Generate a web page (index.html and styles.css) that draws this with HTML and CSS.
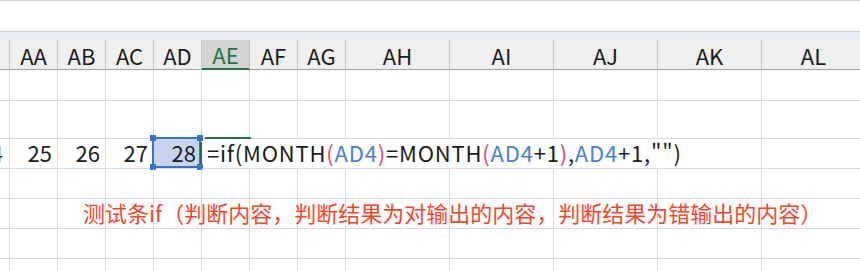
FILE: index.html
```html
<!DOCTYPE html>
<html lang="zh-CN">
<head>
    <meta charset="UTF-8">
    <title>Sheet</title>
    <link rel="stylesheet" href="styles.css">
</head>
<body>
    <div class="sheet">
        <div class="formula-bar"></div>
        <div class="band"></div>
        <div class="grid">
            <div class="head"></div>
            <div class="head">AA</div><div class="head">AB</div><div class="head">AC</div><div class="head">AD</div>
            <div class="head head-active">AE</div><div class="head">AF</div><div class="head">AG</div>
            <div class="head">AH</div><div class="head">AI</div><div class="head">AJ</div><div class="head">AK</div><div class="head">AL</div>

            <div class="cell"></div><div class="cell"></div><div class="cell"></div><div class="cell"></div><div class="cell"></div><div class="cell"></div><div class="cell"></div><div class="cell"></div><div class="cell"></div><div class="cell"></div><div class="cell"></div><div class="cell"></div><div class="cell"></div>

            <div class="cell"></div><div class="cell"></div><div class="cell"></div><div class="cell"></div><div class="cell"></div><div class="cell"></div><div class="cell"></div><div class="cell"></div><div class="cell"></div><div class="cell"></div><div class="cell"></div><div class="cell"></div><div class="cell"></div>

            <div class="cell num"><span class="num-edge">4</span></div>
            <div class="cell num">25</div>
            <div class="cell num">26</div>
            <div class="cell num">27</div>
            <div class="cell num cell-selected">
                28
                <div class="selection">
                    <span class="handle handle-tl"></span>
                    <span class="handle handle-tr"></span>
                    <span class="handle handle-bl"></span>
                    <span class="handle handle-br"></span>
                </div>
            </div>
            <div class="cell cell-formula no-line">
                <span class="edit-top"></span>
                <span class="edit-left"></span>
                <span class="formula">=if(MONTH<span class="paren">(</span><span class="ref">AD4</span><span class="paren">)</span>=MONTH<span class="paren">(</span><span class="ref">AD4</span>+1<span class="paren">)</span>,<span class="ref">AD4</span>+1,"")</span>
            </div>
            <div class="cell no-line"></div><div class="cell no-line"></div><div class="cell no-line"></div><div class="cell no-line"></div><div class="cell no-line"></div>
            <div class="cell"></div><div class="cell"></div>

            <div class="cell"></div><div class="cell"></div><div class="cell"></div><div class="cell"></div><div class="cell"></div><div class="cell"></div><div class="cell"></div><div class="cell"></div><div class="cell"></div><div class="cell"></div><div class="cell"></div><div class="cell"></div><div class="cell"></div>

            <div class="cell"></div><div class="cell"></div><div class="cell"></div><div class="cell"></div><div class="cell"></div><div class="cell"></div><div class="cell"></div><div class="cell"></div><div class="cell"></div><div class="cell"></div><div class="cell"></div><div class="cell"></div><div class="cell"></div>

            <div class="cell"></div><div class="cell"></div><div class="cell"></div><div class="cell"></div><div class="cell"></div><div class="cell"></div><div class="cell"></div><div class="cell"></div><div class="cell"></div><div class="cell"></div><div class="cell"></div><div class="cell"></div><div class="cell"></div>

            <div class="cell"></div><div class="cell"></div><div class="cell"></div><div class="cell"></div><div class="cell"></div><div class="cell"></div><div class="cell"></div><div class="cell"></div><div class="cell"></div><div class="cell"></div><div class="cell"></div><div class="cell"></div><div class="cell"></div>
        </div>
        <div class="note">测试条if（判断内容，判断结果为对输出的内容，判断结果为错输出的内容）</div>
    </div>
</body>
</html>
```

FILE: styles.css
```css
* {
    box-sizing: border-box;
}

body {
    margin: 0;
    background: #fff;
    font-family: 'Noto Sans CJK SC', 'Noto Sans', sans-serif;
    color: #1c1c1c;
}

.sheet {
    position: relative;
    width: 860px;
    height: 271px;
    overflow: hidden;
}

.formula-bar {
    height: 32px;
    border-top: 1px solid #d6d6d6;
    border-bottom: 1px solid #d0d0d0;
    background: #fff;
}

.band {
    height: 8px;
    background: #e9ecef;
}

.grid {
    display: grid;
    grid-template-columns: 10px repeat(7, 48px) repeat(5, 104px);
    grid-template-rows: 30px 31px 38px 30px 30px 30px 30px 30px;
    width: 866px;
}

.head {
    display: flex;
    justify-content: center;
    align-items: center;
    background: #efefef;
    border-right: 1px solid #c6c6c6;
    border-bottom: 1px solid #a3a3a3;
    font-size: 22px;
    color: #1c1c1c;
}

.head-active {
    background: #d3d3d3;
    color: #217346;
    border-bottom: 2px solid #217346;
}

.cell {
    position: relative;
    border-right: 1px solid #dadada;
    border-bottom: 1px solid #dadada;
    font-size: 22px;
}

.num {
    display: flex;
    justify-content: flex-end;
    align-items: center;
    padding-right: 5px;
    padding-bottom: 3px;
    white-space: nowrap;
}

.num-edge {
    margin-right: 1px;
}

.cell-selected {
    background: #c8d5ef;
}

.selection {
    position: absolute;
    top: -2px;
    left: -2px;
    right: 0;
    bottom: 0;
    border: 2px solid #3b6fd0;
}

.handle {
    position: absolute;
    width: 6px;
    height: 6px;
    background: #3b6fd0;
}

.handle-tl { top: -4px; left: -4px; }
.handle-tr { top: -4px; right: -4px; }
.handle-bl { bottom: -4px; left: -4px; }
.handle-br { bottom: -4px; right: -4px; }

.no-line {
    border-right-color: transparent;
}

.cell-formula {
    display: flex;
    align-items: center;
    padding-left: 5px;
    padding-bottom: 3px;
    z-index: 1;
}

.formula {
    white-space: pre;
    letter-spacing: 0.8px;
}

.paren {
    color: #e0466a;
}

.ref {
    color: #4a7fd6;
}

.edit-top {
    position: absolute;
    top: -2px;
    left: 3px;
    width: 46px;
    height: 2px;
    background: #217346;
}

.edit-left {
    position: absolute;
    top: 3px;
    left: -2px;
    width: 2px;
    height: 22px;
    background: #217346;
}

.note {
    position: absolute;
    left: 83px;
    top: 197px;
    line-height: 30px;
    font-size: 22px;
    color: #f5462c;
    white-space: nowrap;
}
```
